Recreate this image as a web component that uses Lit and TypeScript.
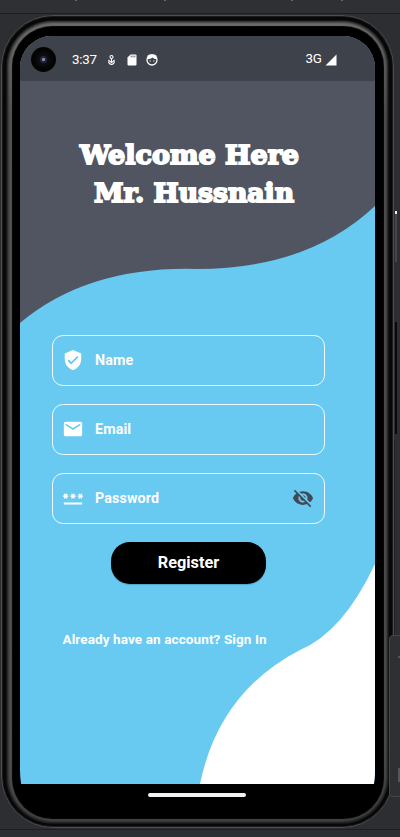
import { LitElement, html, svg, css } from "lit";
import { customElement, property } from "lit/decorators.js";

const icons: Record<string, unknown> = {
  shield: svg`<path d="M12 1 3 5v6c0 5.55 3.84 10.74 9 12 5.16-1.26 9-6.45 9-12V5l-9-4zm-2 16-4-4 1.41-1.41L10 14.17l6.59-6.59L18 9l-8 8z"/>`,
  mail: svg`<path d="M20 4H4c-1.1 0-2 .9-2 2v12c0 1.1.9 2 2 2h16c1.1 0 2-.9 2-2V6c0-1.1-.9-2-2-2zm0 4-8 5-8-5V6l8 5 8-5v2z"/>`,
  password: svg`<path d="M2 17h20v2H2v-2zm1.15-4.05L4 11.47l.85 1.48 1.3-.75-.85-1.48H7v-1.5H5.3l.85-1.47L4.85 7 4 8.47 3.15 7l-1.3.75.85 1.47H1v1.5h1.7l-.85 1.48 1.3.75zm6.7-.75 1.3.75.85-1.48.85 1.48 1.3-.75-.85-1.48H15v-1.5h-1.7l.85-1.47-1.3-.75L12 8.47 11.15 7l-1.3.75.85 1.47H9v1.5h1.7l-.85 1.48zM23 9.22h-1.7l.85-1.47-1.3-.75L20 8.47 19.15 7l-1.3.75.85 1.47H17v1.5h1.7l-.85 1.48 1.3.75.85-1.48.85 1.48 1.3-.75-.85-1.48H23v-1.5z"/>`,
  hidden: svg`<path d="M12 7c2.76 0 5 2.24 5 5 0 .65-.13 1.26-.36 1.83l2.92 2.92c1.51-1.26 2.7-2.89 3.43-4.75-1.73-4.39-6-7.5-11-7.5-1.4 0-2.74.25-3.98.7l2.16 2.16C10.74 7.13 11.35 7 12 7zM2 4.27l2.28 2.28.46.46C3.08 8.3 1.78 10.02 1 12c1.73 4.39 6 7.5 11 7.5 1.55 0 3.03-.3 4.38-.84l.42.42L19.73 22 21 20.73 3.27 3 2 4.27zM7.53 9.8l1.55 1.55c-.05.21-.08.43-.08.65 0 1.66 1.34 3 3 3 .22 0 .44-.03.65-.08l1.55 1.55c-.67.33-1.41.53-2.2.53-2.76 0-5-2.24-5-5 0-.79.2-1.53.53-2.2zm4.31-.78 3.15 3.15.02-.16c0-1.66-1.34-3-3-3l-.17.01z"/>`,
};

@customElement("form-field")
export class FormField extends LitElement {
  @property() icon = "";
  @property() label = "";
  @property() trailing = "";
  static styles = css`
    :host {
      display: flex;
      align-items: center;
      box-sizing: border-box;
      height: 51px;
      padding: 0 10px 1px 9.5px;
      border: 1px solid #effaff;
      border-radius: 11px;
      color: #fff;
      font: 700 14.3px/20px Roboto, sans-serif;
      letter-spacing: 0.12px;
    }
    svg { width: 22px; height: 22px; fill: currentColor; flex: none; }
    .label { flex: 1; margin-left: 11px; }
    .trailing { color: #414955; }
  `;
  render() {
    return html`
      <svg viewBox="0 0 24 24">${icons[this.icon]}</svg>
      <span class="label">${this.label}</span>
      ${this.trailing
        ? html`<svg class="trailing" viewBox="0 0 24 24">${icons[this.trailing]}</svg>`
        : ""}
    `;
  }
}

@customElement("app-root")
export class AppRoot extends LitElement {
  static styles = css`
    :host {
      display: block;
      position: relative;
      box-sizing: border-box;
      width: 400px;
      height: 837px;
      padding: 15px 6px 8px 1px;
      overflow: hidden;
      background: #2d2e32;
      font-family: Roboto, sans-serif;
      color: #fff;
    }
    .desk { position: absolute; inset: 0; width: 400px; height: 837px; }
    .toolbar {
      position: absolute;
      left: 389px;
      top: 635px;
      width: 20px;
      height: 162px;
      box-sizing: border-box;
      border: 1px solid #434447;
      border-radius: 4px;
      background: #2f3034;
    }
    .toolbar svg { display: block; width: 10px; height: 160px; }
    .shell {
      position: relative;
      box-sizing: border-box;
      height: 813px;
      padding: 5px 5px 4px 5px;
      border: 1px solid #4c4d4e;
      border-radius: 52px;
      background: #070707;
      box-shadow: inset 0 0 0 1px #1b1b1c;
    }
    .rim {
      box-sizing: border-box;
      height: 802px;
      padding: 6px 5px 5px 6px;
      border-radius: 46px;
      background: linear-gradient(#707070, #565656 12%, #525252 90%, #484848);
      box-shadow: 0 0 0 1px #161616, inset 0 0 3px 1px #111;
    }
    .glass {
      box-sizing: border-box;
      height: 791px;
      padding: 9px 8px 0 7px;
      border-radius: 40px;
      background: #000;
      box-shadow: 0 0 1px 0.5px #000;
    }
    .viewport { height: 748px; overflow: hidden; }
    .screen {
      position: relative;
      height: 764px;
      border-radius: 32px 32px 10px 10px / 32px 32px 30px 30px;
      overflow: hidden;
      background: #68c9f1;
    }
    .waves { position: absolute; left: 0; top: 0; width: 355px; height: 748px; }
    .content { position: relative; display: flex; flex-direction: column; }
    .status {
      display: flex;
      align-items: center;
      height: 45px;
      box-sizing: border-box;
      padding: 2px 38.5px 0 11px;
      background: #3e424a;
    }
    .camera {
      width: 25px; height: 25px;
      margin-right: 16px;
      border-radius: 50%;
      background: radial-gradient(circle, #8d91b0 0 1px, #25283b 2px 3px, #0d0e12 4px, #030303 10px);
    }
    .time { width: 35px; font-size: 13.4px; letter-spacing: -0.3px; }
    .status svg { display: block; }
    .sd { margin-left: 11px; }
    .face { margin-left: 9px; }
    .network { margin: -2px 3px 0 auto; font-size: 13.4px; letter-spacing: -0.3px; }
    .title { margin: 54px 0 0; height: 77px; }
    .title svg { width: 355px; height: 77px; display: block; }
    .title text {
      font: 900 26.8px "DejaVu Serif", serif;
      fill: #fff;
      stroke: #fff;
      stroke-width: 1.9px;
      stroke-linejoin: miter;
    }
    .fields { display: grid; gap: 18px; margin: 123px 50px 0 31.5px; width: 273.5px; }
    .register {
      width: 155px; height: 42px;
      margin: 17.5px 0 0 91px;
      padding: 0 0 1px;
      border: 0;
      border-radius: 19px;
      background: #000;
      color: #fff;
      font: 700 16.3px Roboto, sans-serif;
      box-shadow: 0 1px 1px #2b5b7055;
    }
    .signin {
      margin: 45.5px 0 0 42.5px;
      font: 700 13.5px/20px Roboto, sans-serif;
      letter-spacing: 0.11px;
      white-space: nowrap;
    }
    .handle { width: 98px; height: 4px; margin: 9px 0 0 128px; border-radius: 2px; background: #f2f0f0; }
  `;

  render() {
    return html`
      <svg class="desk" viewBox="0 0 400 837">
        <path d="M0 0H400V13H0z" fill="#2f3034" />
        <path d="M0 13.5H400M0 829.5H400" stroke="#1d1e21" />
        <path d="M76 0v1M165 0v1M292 0v1M342 0v1" stroke="#68696c" stroke-width="2" />
        <path d="M396 212V262" stroke="#45464a" stroke-width="2" />
        <path d="M396 211v3" stroke="#eee" stroke-width="2" />
        <path d="M396 322V434" stroke="#080808" stroke-width="2" />
        <path d="M394.5 440V635" stroke="#222327" />
      </svg>
      <div class="shell">
        <div class="rim">
          <div class="glass">
            <div class="viewport">
              <div class="screen">
                <svg class="waves" viewBox="20 36 355 748">
                  <path fill="#515562" d="M20 36H375V206Q308 269 197 269Q88 266 20 323z" />
                  <path fill="#fff" d="M375 564Q343 632 300 650Q219 692 200 784H375z" />
                </svg>
                <div class="content">
                  <div class="status">
                    <span class="camera"></span>
                    <span class="time">3:37</span>
                    <svg width="9" height="12" viewBox="0 0 9 12" fill="none" stroke="#fff" stroke-width="1.1">
                      <circle cx="4.5" cy="3" r="1.5" />
                      <path d="M1.4 6 4.5 8.6 7.6 6" />
                      <path d="M1.5 7.4C2.2 11.4 6.8 11.4 7.5 7.4M4.5 4.5v3.6" />
                    </svg>
                    <svg class="sd" width="10" height="12" viewBox="0 0 10 12">
                      <path fill="#fff" d="M3.5.5H8.5Q9.5.5 9.5 1.5V10.5Q9.5 11.5 8.5 11.5H1.5Q.5 11.5.5 10.5V3.5z" />
                      <path stroke="#3e424a" stroke-width=".8" d="M4.2 1.6v1.8M6 1.6v1.8M7.8 1.6v1.8" />
                    </svg>
                    <svg class="face" width="12" height="12" viewBox="0 0 12 12">
                      <circle cx="6" cy="6" r="5" fill="none" stroke="#fff" stroke-width="1.3" />
                      <path fill="#fff" d="M1 5.2 1.6 1.5 3.5.6H8.5L10.4 1.5 11 5.2Q8 5.3 6.5 3.5Q4.5 5.5 1 5.2z" />
                      <path fill="#fff" d="M3.6 6.4h1.1v1.1H3.6zM7.3 6.4h1.1v1.1H7.3z" />
                    </svg>
                    <span class="network">3G</span>
                    <svg width="12" height="12" viewBox="0 0 12 12"><path fill="#fff" d="M11.5.5v11H.5z" /></svg>
                  </div>
                  <div class="title">
                    <svg viewBox="0 0 355 77">
                      <text x="60" y="29" textLength="219" lengthAdjust="spacingAndGlyphs">Welcome Here</text>
                      <text x="74" y="67.2" textLength="200" lengthAdjust="spacingAndGlyphs">Mr. Hussnain</text>
                    </svg>
                  </div>
                  <div class="fields">
                    <form-field icon="shield" label="Name"></form-field>
                    <form-field icon="mail" label="Email"></form-field>
                    <form-field icon="password" label="Password" trailing="hidden"></form-field>
                  </div>
                  <button class="register">Register</button>
                  <div class="signin">Already have an account? Sign In</div>
                </div>
              </div>
            </div>
            <div class="handle"></div>
          </div>
        </div>
      </div>
      <div class="toolbar">
        <svg viewBox="390 636 10 160"><path d="M398 657h2M399 768v14" stroke="#55565a" stroke-width="2" /></svg>
      </div>
    `;
  }
}
